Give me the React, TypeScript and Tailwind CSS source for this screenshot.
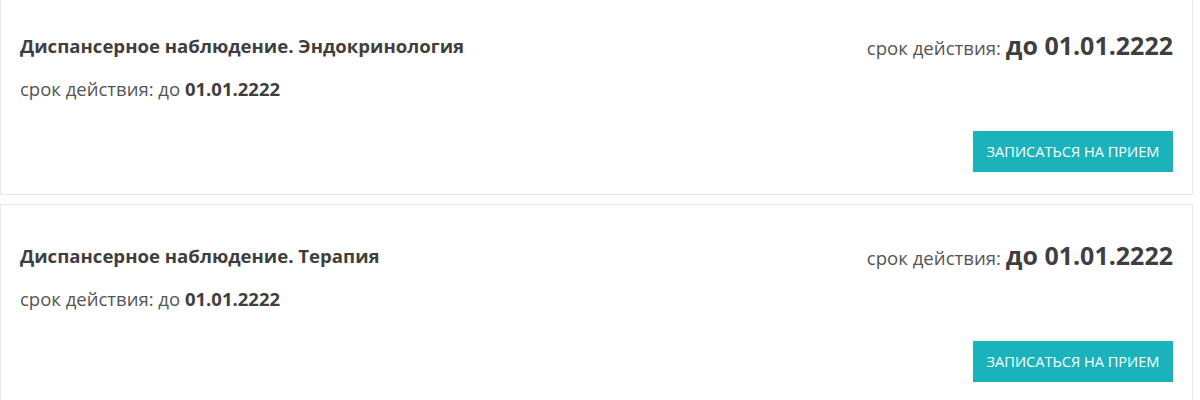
import React from "react";

function Card({ title }: { title: string }) {
  return (
    <div className="border border-[#e8e8e8] bg-white w-[1193px] h-[201px] px-[19px] pt-[39px] flex justify-between">
      <div className="flex flex-col">
        <div className="text-[18.6px] leading-[24px] font-bold text-[#3f3f3f]">{title}</div>
        <div className="mt-[19px] text-[18.5px] leading-[24px] text-[#555]">
          срок действия: до <span className="font-bold text-[#3f3f3f]">01.01.2222</span>
        </div>
      </div>
      <div className="flex flex-col items-end">
        <div className="text-[18.6px] leading-[30px] text-[#555] flex items-baseline mt-[-4px]">
          срок действия:&nbsp;<span className="text-[25px] font-bold text-[#3f3f3f]">до 01.01.2222</span>
        </div>
        <button className="mt-[68px] w-[200px] h-[41px] bg-[#1bb3bb] text-white text-[14.6px] uppercase">
          Записаться на прием
        </button>
      </div>
    </div>
  );
}

export default function App() {
  return (
    <div className="bg-white w-[1200px] h-[400px] overflow-hidden" style={{ fontFamily: '"Open Sans", sans-serif' }}>
      <div className="mt-[-6px] flex flex-col gap-[9px]">
        <Card title="Диспансерное наблюдение. Эндокринология" />
        <Card title="Диспансерное наблюдение. Терапия" />
      </div>
    </div>
  );
}
